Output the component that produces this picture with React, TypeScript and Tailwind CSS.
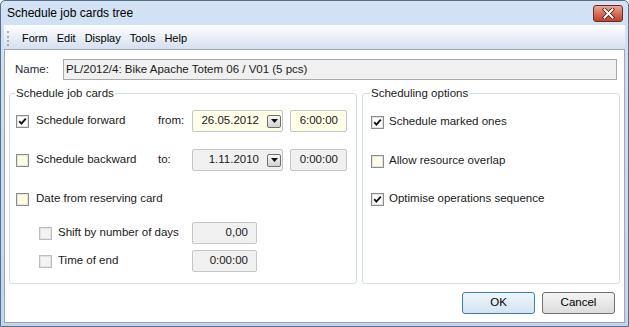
import type { ReactNode } from "react";

const Check = () => (
  <svg width="9" height="9" viewBox="0 0 9 9">
    <polyline points="1.2,4.2 3.4,6.6 7.8,1.6" fill="none" stroke="#111" strokeWidth="1.9" />
  </svg>
);

function Box({ checked, tone = "white" }: { checked?: boolean; tone?: "white" | "cream" | "off" }) {
  const fill = tone === "cream" ? "bg-[#fffde2]" : tone === "off" ? "bg-[#f3f3f3]" : "bg-white";
  const edge = tone === "off" ? "border-[#bdbdbd]" : "border-[#8b8c8d]";
  return (
    <span className={`w-[13px] h-[13px] border ${edge} flex shrink-0`}>
      <span className={`flex-1 border border-[#e2e2e2] ${fill} flex items-center justify-center`}>
        {checked && <Check />}
      </span>
    </span>
  );
}

const DropBtn = () => (
  <span className="w-[14px] h-[13px] border border-[#6f6f6f] rounded-[2px] bg-gradient-to-b from-[#f7f7f7] to-[#d2d2d2] flex items-center justify-center">
    <svg width="7" height="4" viewBox="0 0 7 4">
      <polygon points="0,0 7,0 3.5,4" fill="#111" />
    </svg>
  </span>
);

function Field({ w, bg, children, pr = "pr-[8px]" }: { w: string; bg: string; children: ReactNode; pr?: string }) {
  return (
    <div className={`${w} h-[22px] border border-[#c6c6c6] rounded-[2px] ${bg} flex items-center justify-end ${pr}`}>
      {children}
    </div>
  );
}

const App = () => {
  return (
    <div className="w-[629px] h-[327px] flex flex-col border border-[#56708a] rounded-t-[5px] bg-gradient-to-b from-[#d3e2f4] to-[#c2d6ee] font-['Liberation_Sans',Arial,sans-serif] text-[11.5px] text-[#1a1a1a] overflow-hidden">
      {/* Title bar */}
      <div className="h-[24px] flex items-center justify-between pl-[6px] pr-[5px]">
        <span className="text-[12px] text-black">Schedule job cards tree</span>
        <span className="w-[30px] h-[17px] border border-[#6e2b21] rounded-[3px] bg-gradient-to-b from-[#e8a797] via-[#d3705d] to-[#c0412d] flex items-center justify-center">
          <svg width="13" height="11" viewBox="0 0 13 11">
            <path d="M2.5 1.5 L10.5 9.5 M10.5 1.5 L2.5 9.5" stroke="#4a1a14" strokeWidth="3.6" strokeLinecap="square" />
            <path d="M2.5 1.5 L10.5 9.5 M10.5 1.5 L2.5 9.5" stroke="#ffffff" strokeWidth="2" strokeLinecap="square" />
          </svg>
        </span>
      </div>

      <div className="flex-1 flex flex-col px-[3px] pb-[3px]">
        {/* Menu bar */}
        <div className="h-[23px] flex items-center pt-[4px] bg-gradient-to-b from-[#fdfeff] to-[#d8e1f0] text-[11px] text-black">
          <span className="ml-[3px] h-[15px] border-l-2 border-dotted border-[#a5adbb]" />
          <div className="ml-[13px] flex gap-[9px]">
            <span>Form</span>
            <span>Edit</span>
            <span>Display</span>
            <span>Tools</span>
            <span>Help</span>
          </div>
        </div>

        {/* Client area */}
        <div className="mt-px flex-1 flex flex-col border border-[#a2a6ab] bg-white">
          {/* Name row */}
          <div className="mt-[9px] h-[21px] flex items-center pl-[10px] pr-[7px]">
            <span className="w-[48px] text-[#1c2a3c]">Name:</span>
            <div className="flex-1 h-[21px] border border-[#a9a9a9] bg-[#f0f0f0] flex items-center pl-[2px]">
              PL/2012/4: Bike Apache Totem 06 / V01 (5 pcs)
            </div>
          </div>

          {/* Group boxes */}
          <div className="mt-[6px] flex gap-[5px] px-[4px]">
            <fieldset className="w-[348px] h-[198px] border border-[#d5dee4] rounded-[3px] flex flex-col">
              <legend className="ml-[5px] px-px leading-[14px]">Schedule job cards</legend>

              <div className="mt-[10px] h-[22px] flex items-center pl-[6px]">
                <div className="w-[142px] flex items-center gap-[7px]">
                  <Box checked />
                  <span>Schedule forward</span>
                </div>
                <span className="w-[34px]">from:</span>
                <Field w="w-[91px]" bg="bg-[#fffee6]" pr="pr-px">
                  <span className="mr-[8px]">26.05.2012</span>
                  <DropBtn />
                </Field>
                <div className="ml-[7px]">
                  <Field w="w-[57px]" bg="bg-[#fffee6]">6:00:00</Field>
                </div>
              </div>

              <div className="mt-[17px] h-[22px] flex items-center pl-[6px]">
                <div className="w-[142px] flex items-center gap-[7px]">
                  <Box tone="cream" />
                  <span>Schedule backward</span>
                </div>
                <span className="w-[34px]">to:</span>
                <Field w="w-[91px]" bg="bg-[#f0f0f0]" pr="pr-px">
                  <span className="mr-[8px]">1.11.2010</span>
                  <DropBtn />
                </Field>
                <div className="ml-[7px]">
                  <Field w="w-[57px]" bg="bg-[#f0f0f0]">0:00:00</Field>
                </div>
              </div>

              <div className="mt-[17px] h-[22px] flex items-center gap-[7px] pl-[6px]">
                <Box tone="cream" />
                <span>Date from reserving card</span>
              </div>

              <div className="mt-[12px] h-[22px] flex items-center pl-[29px]">
                <div className="w-[153px] flex items-center gap-[6px]">
                  <Box tone="off" />
                  <span>Shift by number of days</span>
                </div>
                <Field w="w-[65px]" bg="bg-[#f0f0f0]">0,00</Field>
              </div>

              <div className="mt-[6px] h-[22px] flex items-center pl-[29px]">
                <div className="w-[153px] flex items-center gap-[6px]">
                  <Box tone="off" />
                  <span>Time of end</span>
                </div>
                <Field w="w-[65px]" bg="bg-[#f0f0f0]">0:00:00</Field>
              </div>
            </fieldset>

            <fieldset className="flex-1 h-[198px] border border-[#d5dee4] rounded-[3px] flex flex-col">
              <legend className="ml-[7px] px-px leading-[14px]">Scheduling options</legend>

              <div className="mt-[11px] h-[22px] flex items-center gap-[5px] pl-[8px]">
                <Box checked />
                <span>Schedule marked ones</span>
              </div>
              <div className="mt-[17px] h-[22px] flex items-center gap-[5px] pl-[8px]">
                <Box tone="cream" />
                <span>Allow resource overlap</span>
              </div>
              <div className="mt-[16px] h-[22px] flex items-center gap-[5px] pl-[8px]">
                <Box checked />
                <span>Optimise operations sequence</span>
              </div>
            </fieldset>
          </div>

          {/* Buttons */}
          <div className="mt-[8px] flex justify-end gap-[7px] pr-[9px]">
            <button className="w-[73px] h-[22px] border border-[#3c7fb1] rounded-[3px] bg-gradient-to-b from-[#eef6fc] to-[#d2e3f1] text-black">
              OK
            </button>
            <button className="w-[73px] h-[22px] border border-[#707070] rounded-[3px] bg-gradient-to-b from-[#f4f4f4] to-[#dcdcdc] text-black">
              Cancel
            </button>
          </div>
        </div>
      </div>
    </div>
  );
};

export default App;
